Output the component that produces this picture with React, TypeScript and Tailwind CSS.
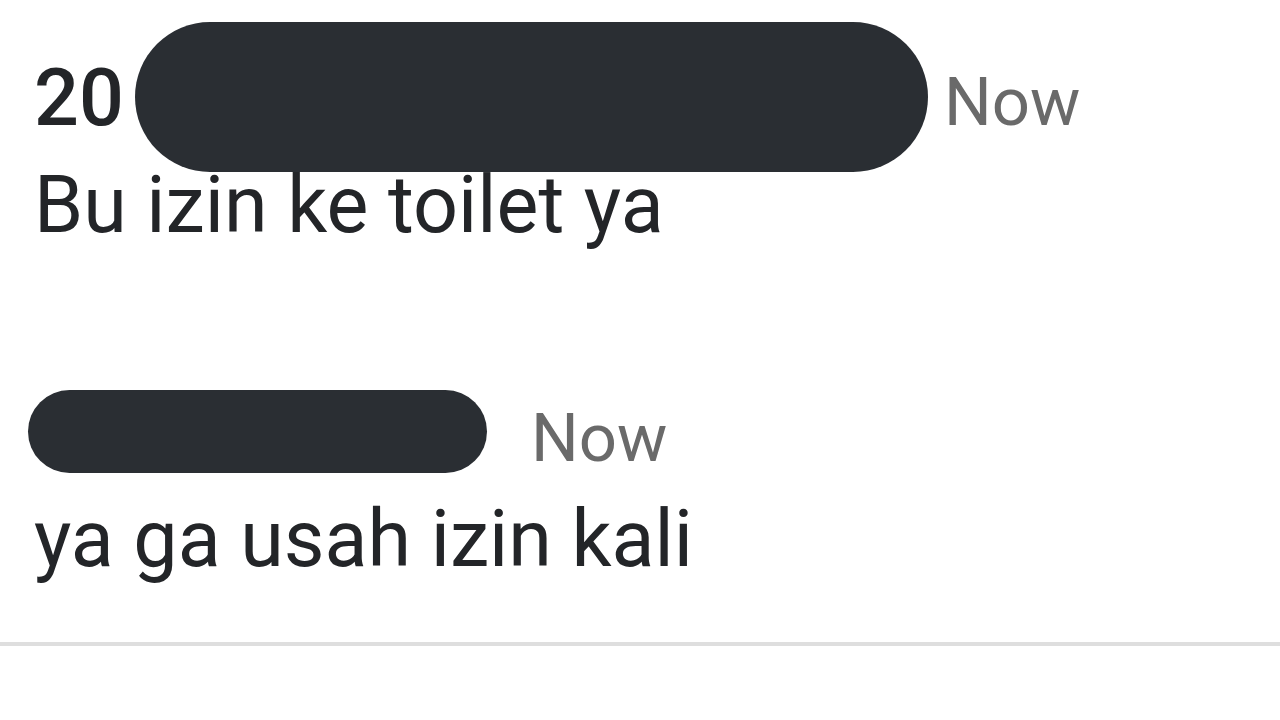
import React from "react";

export default function App() {
  return (
    <div
      className="relative w-[1280px] h-[720px] overflow-hidden bg-white"
      style={{ fontFamily: "Roboto, 'Noto Sans', Arial, sans-serif" }}
    >
      <div className="flex flex-col pl-[34px] pt-[60px] text-[79px] leading-[77px] text-[#232528]">
        <div className="flex h-[77px] items-baseline">
          <div className="w-[910px] shrink-0 font-medium">20</div>
          <span className="text-[67px] text-[#6a6a6a]">Now</span>
        </div>
        <div className="mt-[30px]">Bu izin ke toilet ya</div>

        <div className="mt-[152px] flex h-[77px] items-baseline">
          <div className="w-[497px] shrink-0 font-medium">&nbsp;</div>
          <span className="text-[67px] text-[#6a6a6a]">Now</span>
        </div>
        <div className="mt-[28px]">ya ga usah izin kali</div>
      </div>
      <div className="mt-[64px] h-[4px] w-full bg-[#dedede]" />

      {/* redaction overlays */}
      <div className="absolute left-[135px] top-[22px] h-[150px] w-[793px] rounded-full bg-[#2a2e33]" />
      <div className="absolute left-[28px] top-[390px] h-[83px] w-[459px] rounded-[42px] bg-[#2a2e33]" />
    </div>
  );
}
